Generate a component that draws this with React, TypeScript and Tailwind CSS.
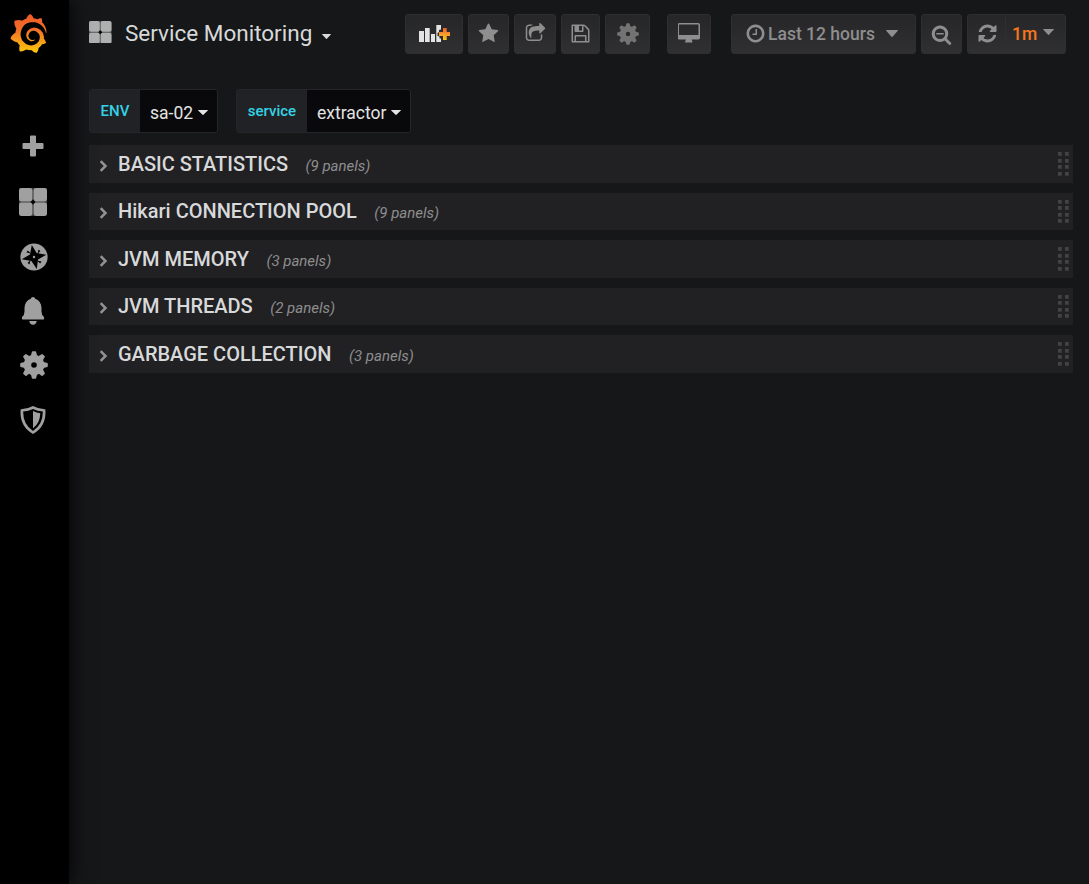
import React from "react";
import { SiGrafana } from "react-icons/si";

const icons = {
  star: "M1728 647q0 22-26 48l-363 354 86 500q1 7 1 20 0 21-10.5 35.5t-30.5 14.5q-19 0-40-12l-449-236-449 236q-22 12-40 12-21 0-31.5-14.5t-10.5-35.5q0-6 2-20l86-500-364-354q-25-27-25-48 0-37 56-46l502-73 225-455q19-41 49-41t49 41l225 455 502 73q56 9 56 46z",
  share: "M1472 989v259q0 119-84.5 203.5t-203.5 84.5h-832q-119 0-203.5-84.5t-84.5-203.5v-832q0-119 84.5-203.5t203.5-84.5h255q13 0 22.5 9.5t9.5 22.5q0 27-26 32-77 26-133 60-10 4-16 4h-112q-66 0-113 47t-47 113v832q0 66 47 113t113 47h832q66 0 113-47t47-113v-214q0-19 18-29 28-13 54-37 16-16 35-8 21 9 21 29zm237-496l-384 384q-18 19-45 19-12 0-25-5-39-17-39-59v-192h-160q-323 0-438 131-119 137-74 473 3 23-20 34-8 2-12 2-16 0-26-13-10-14-21-31t-39.5-68.5-49.5-99.5-38.5-114-17.5-122q0-49 3.5-91t14-90 28-88 47-81.5 68.5-74 94.5-61.5 124.5-48.5 159.5-30.5 196.5-11h160v-192q0-42 39-59 13-5 25-5 26 0 45 19l384 384q19 19 19 45t-19 45z",
  save: "M512 1536h768v-384h-768v384zm896 0h128v-896q0-14-10-38.5t-20-34.5l-281-281q-10-10-34-20t-39-10v416q0 40-28 68t-68 28h-576q-40 0-68-28t-28-68v-416h-128v1280h128v-416q0-40 28-68t68-28h832q40 0 68 28t28 68v416zm-384-928v-320q0-13-9.5-22.5t-22.5-9.5h-192q-13 0-22.5 9.5t-9.5 22.5v320q0 13 9.5 22.5t22.5 9.5h192q13 0 22.5-9.5t9.5-22.5zm640 32v928q0 40-28 68t-68 28h-1344q-40 0-68-28t-28-68v-1344q0-40 28-68t68-28h928q40 0 88 20t76 48l280 280q28 28 48 76t20 88z",
  desktop: "M1728 992v-832q0-13-9.5-22.5t-22.5-9.5h-1600q-13 0-22.5 9.5t-9.5 22.5v832q0 13 9.5 22.5t22.5 9.5h1600q13 0 22.5-9.5t9.5-22.5zm128-832v1088q0 66-47 113t-113 47h-544q0 37 16 77.5t32 71 16 43.5q0 26-19 45t-45 19h-512q-26 0-45-19t-19-45q0-14 16-44t32-70 16-78h-544q-66 0-113-47t-47-113v-1088q0-66 47-113t113-47h1600q66 0 113 47t47 113z",
  clock: "M1024 544v448q0 14-9 23t-23 9h-320q-14 0-23-9t-9-23v-64q0-14 9-23t23-9h224v-352q0-14 9-23t23-9h64q14 0 23 9t9 23zm416 352q0-148-73-273t-198-198-273-73-273 73-198 198-73 273 73 273 198 198 273 73 273-73 198-198 73-273zm224 0q0 209-103 385.5t-279.5 279.5-385.5 103-385.5-103-279.5-279.5-103-385.5 103-385.5 279.5-279.5 385.5-103 385.5 103 279.5 279.5 103 385.5z",
  zoomOut: "M1088 800v64q0 13-9.5 22.5t-22.5 9.5h-576q-13 0-22.5-9.5t-9.5-22.5v-64q0-13 9.5-22.5t22.5-9.5h576q13 0 22.5 9.5t9.5 22.5zm128 32q0-185-131.5-316.5t-316.5-131.5-316.5 131.5-131.5 316.5 131.5 316.5 316.5 131.5 316.5-131.5 131.5-316.5zm512 832q0 53-37.5 90.5t-90.5 37.5q-54 0-90-38l-343-342q-179 124-399 124-143 0-273.5-55.5t-225-150-150-225-55.5-273.5 55.5-273.5 150-225 225-150 273.5-55.5 273.5 55.5 225 150 150 225 55.5 273.5q0 220-124 399l343 343q37 37 37 90z",
  refresh: "M1639 1056q0 5-1 7-64 268-268 434.5t-478 166.5q-146 0-282.5-55t-243.5-157l-129 129q-19 19-45 19t-45-19-19-45v-448q0-26 19-45t45-19h448q26 0 45 19t19 45-19 45l-137 137q71 66 161 102t187 36q134 0 250-65t186-179q11-17 53-117 8-23 30-23h192q13 0 22.5 9.5t9.5 22.5zm25-800v448q0 26-19 45t-45 19h-448q-26 0-45-19t-19-45 19-45l138-138q-148-137-349-137-134 0-250 65t-186 179q-11 17-53 117-8 23-30 23h-199q-13 0-22.5-9.5t-9.5-22.5v-7q65-268 270-434.5t480-166.5q146 0 284 55.5t245 156.5l130-129q19-19 45-19t45 19 19 45z",
};

function Glyph({ d, className = "size-[21px]", box = "0 0 1792 1792" }: { d: string; className?: string; box?: string }) {
  return (
    <svg viewBox={box} className={`shrink-0 ${className}`} fill="currentColor">
      <path d={d} />
    </svg>
  );
}

function Gear({ className }: { className: string }) {
  return (
    <svg viewBox="-14 -14 28 28" className={`shrink-0 ${className}`} fill="currentColor">
      <path fillRule="evenodd" d="M0-10A10 10 0 1 1 0 10A10 10 0 1 1 0-10ZM0-2.8A2.8 2.8 0 1 0 0 2.8A2.8 2.8 0 1 0 0-2.8Z" />
      {[0, 45, 90, 135, 180, 225, 270, 315].map((a) => (
        <path key={a} transform={`rotate(${a})`} d="M-4.2-8.8Q-2.4-10-2.3-12.4Q-2.2-13.8-1.2-13.8H1.2Q2.2-13.8 2.3-12.4Q2.4-10 4.2-8.8Z" />
      ))}
    </svg>
  );
}

function Squares({ className }: { className: string }) {
  return (
    <svg viewBox="0 0 28 28" className={`shrink-0 ${className}`} fill="currentColor">
      <rect x="0" y="0" width="28" height="28" rx="2" opacity=".42" />
      <rect x="0" y="0" width="13.4" height="13.4" rx="2.4" />
      <rect x="14.6" y="0" width="13.4" height="13.4" rx="2.4" />
      <rect x="0" y="14.6" width="13.4" height="13.4" rx="2.4" />
      <rect x="14.6" y="14.6" width="13.4" height="13.4" rx="2.4" />
      <path d="M14 11.6L16.4 14L14 16.4L11.6 14Z" fill="#050505" />
    </svg>
  );
}

function Caret({ className }: { className: string }) {
  return (
    <svg viewBox="0 0 12 6" preserveAspectRatio="none" className={`shrink-0 ${className}`} fill="currentColor">
      <path d="M.5 0h11q.7 0 .3.6L6.5 5.7q-.5.5-1 0L.2.6Q-.2 0 .5 0Z" />
    </svg>
  );
}

function NavButton({ className, children }: { className: string; children: React.ReactNode }) {
  return (
    <button className={`flex h-10 shrink-0 items-center rounded-[3px] border border-[#2f2f32] bg-linear-to-b from-[#262628] to-[#303032] text-[#8e8e8e] ${className}`}>
      {children}
    </button>
  );
}

function AddPanelIcon() {
  return (
    <svg viewBox="0 0 32 20" className="ml-px h-5 w-8 shrink-0">
      <defs>
        <linearGradient id="plus" x1="0" y1="0" x2="0" y2="1">
          <stop offset="0" stopColor="#f0592b" />
          <stop offset=".5" stopColor="#f7982d" />
          <stop offset="1" stopColor="#fdc90f" />
        </linearGradient>
      </defs>
      <path fill="#e3e3e3" d="M0 7h5v11H0zM6 4h4.700v14H6zM12 10h4v8h-4zM17.300 1h4.700v4.500L20 6v2l-1.500 1v3l2 .5v2h1.500V18h-4.700z" />
      <path fill="url(#plus)" d="M24 4h3.700v4h3.300v4h-3.300v4h-3.700v-4h-4V8h4z" />
    </svg>
  );
}

function Variable({ label, value, labelWidth, valueWidth }: { label: string; value: string; labelWidth: string; valueWidth: string }) {
  return (
    <div className="flex h-11 overflow-hidden rounded-[3px] border border-[#252628]">
      <div className={`flex items-center justify-center bg-[#212226] pt-px text-[15px] font-medium text-[#33d3e5] ${labelWidth}`}>{label}</div>
      <div className={`flex items-center gap-1 bg-[#09090b] pt-[5px] pl-2.5 text-[17.5px] text-[#e3e3e3] ${valueWidth}`}>
        <span className="whitespace-nowrap">{value}</span>
        <Caret className="mb-0.5 ml-px h-[5px] w-[10px]" />
      </div>
    </div>
  );
}

const rows = [
  { title: "BASIC STATISTICS", panels: 9 },
  { title: "Hikari CONNECTION POOL", panels: 9 },
  { title: "JVM MEMORY", panels: 3 },
  { title: "JVM THREADS", panels: 2 },
  { title: "GARBAGE COLLECTION", panels: 3 },
];

function Row({ title, panels }: { title: string; panels: number }) {
  return (
    <div className="flex h-[37.5px] items-center bg-[#212124] pr-1 pl-[10px]">
      <svg viewBox="0 0 8 12" className="mt-1 h-3 w-[9px] shrink-0" fill="none" stroke="#929292" strokeWidth="2.5">
        <path d="M1.200 1.200L6 6L1.200 10.800" />
      </svg>
      <h2 className="ml-[10px] text-[20px] leading-6 font-medium text-[#d8d9da]">{title}</h2>
      <span className="mt-1 ml-[17.500px] text-[15px] text-[#8e8e8e] italic">({panels} panels)</span>
      <div className="ml-auto grid grid-cols-2 gap-x-[3px] gap-y-[2.500px]">
        {[0, 1, 2, 3, 4, 5, 6, 7].map((i) => (
          <i key={i} className="size-1 border-r border-b border-[#38383a] bg-[#434346]" />
        ))}
      </div>
    </div>
  );
}

function Sidebar() {
  return (
    <nav className="relative z-10 flex w-[69px] shrink-0 flex-col bg-black text-[#a0a0a0] shadow-[0_0_20px_#000]">
      <svg className="size-0">
        <defs>
          <linearGradient id="brand" x1="0" y1="0" x2="0" y2="1">
            <stop offset="0" stopColor="#f05a28" />
            <stop offset=".4" stopColor="#f36f27" />
            <stop offset="1" stopColor="#fbca0a" />
          </linearGradient>
        </defs>
      </svg>
      <SiGrafana className="mt-3.5 ml-[9px] size-[39px]" style={{ fill: "url(#brand)" }} />
      <div className="mt-[79px] flex w-[66px] flex-col items-center">
        <div className="flex h-7 items-center">
          <svg viewBox="0 0 22 22" className="size-[22px]" fill="currentColor">
            <path d="M9 .5h4q1 0 1 1V8h6.500q1 0 1 1v4q0 1-1 1H14v6.500q0 1-1 1H9q-1 0-1-1V14H1.500q-1 0-1-1V9q0-1 1-1H8V1.500q0-1 1-1Z" />
          </svg>
        </div>
        <Squares className="mt-7 size-7" />
        <svg viewBox="-14 -14 28 28" className="mt-[26.500px] ml-px size-7">
          <circle r="13.600" fill="currentColor" />
          <g fill="#000">
            <path d="M-2.200-12L2.600-4L12.300-2.200L4 2.600L2.800 12L-2.600 4L-12.300 2.200L-4-2.600Z" />
            <path d="M4.500-7.500L6.400-6L3.500-3zM7.500 4.500L6.200 6.400L3 3.500zM-4.500 7.500L-6.400 6L-3.500 3zM-7.500-4.500L-6.200-6.400L-3-3.500z" />
          </g>
          <circle r="1.200" fill="currentColor" />
        </svg>
        <svg viewBox="0 0 24 28" className="mt-[26.500px] h-7 w-6" fill="currentColor">
          <path d="M12 0Q14 0 14.200 1.700Q20 3.500 20.500 11V14.500Q20.500 18 22.800 19.700Q23.500 21 22.800 22.500H1.200Q.5 21 1.200 19.700Q3.500 18 3.500 14.500V11Q4 3.500 9.800 1.700Q10 0 12 0ZM8.300 24H15.700Q15.200 27.700 12 27.700T8.300 24Z" />
        </svg>
        <Gear className="mt-[26px] ml-px size-7" />
        <svg viewBox="0 0 26 28" className="mt-[27px] h-7 w-[26px]" fill="currentColor">
          <path fillRule="evenodd" d="M13 0Q19 3.300 25.300 3.200Q27 20 13 28Q-1 20 .7 3.200Q7 3.300 13 0ZM13 3Q8.500 5.400 3.200 5.600Q2.900 18.500 13 25Q23.100 18.500 22.800 5.600Q17.500 5.400 13 3Z" />
          <path d="M13 5Q16.500 7 20.300 7.300Q20 17.300 13 22.300Z" />
        </svg>
      </div>
    </nav>
  );
}

export default function App() {
  return (
    <div className="flex h-[884px] w-[1089px] overflow-hidden bg-[#161719] font-['Roboto',sans-serif]">
      <Sidebar />
      <main className="flex min-w-0 flex-1 flex-col pl-5">
        <header className="flex pt-3.5 text-[#d8d9da]">
          <div className="flex h-10 w-[316px] shrink-0 items-center">
            <Squares className="mb-1 size-[22.500px] text-[#afb0b0]" />
            <h1 className="mb-0.5 ml-[13.500px] text-[22.500px] leading-7 whitespace-nowrap">Service Monitoring</h1>
            <Caret className="mt-[5px] ml-2.5 h-[5px] w-[9px]" />
          </div>
          <NavButton className="w-[58px] justify-center">
            <AddPanelIcon />
          </NavButton>
          <NavButton className="ml-[5px] w-[41px] justify-center">
            <Glyph d={icons.star} className="mb-px size-[21px]" />
          </NavButton>
          <NavButton className="ml-[5px] w-[42px] justify-center">
            <Glyph d={icons.share} className="mb-px size-[21px]" />
          </NavButton>
          <NavButton className="ml-[5px] w-[39px] justify-center">
            <Glyph d={icons.save} className="mb-px size-[21px]" />
          </NavButton>
          <NavButton className="ml-[5px] w-[45px] justify-center">
            <Gear className="size-[22px] text-[#737374]" />
          </NavButton>
          <NavButton className="ml-[17px] w-11 justify-center">
            <Glyph d={icons.desktop} box="0 0 1920 1792" className="mb-px h-[21px] w-[23px]" />
          </NavButton>
          <NavButton className="ml-5 w-[185px] pl-[13px]">
            <Glyph d={icons.clock} className="mb-px size-[21px]" />
            <span className="mt-px ml-0.5 text-[17.500px] font-medium whitespace-nowrap">Last 12 hours</span>
            <Caret className="mb-px ml-[11px] h-[7px] w-3" />
          </NavButton>
          <NavButton className="ml-[5px] w-[41px] justify-center">
            <Glyph d={icons.zoomOut} />
          </NavButton>
          <NavButton className="ml-[5px] w-[99px]">
            <span className="flex h-full w-[38px] items-center justify-center border-r border-[#2f2f32] pl-px">
              <Glyph d={icons.refresh} className="mb-px size-[21px]" />
            </span>
            <span className="mt-px ml-[6px] text-[17.500px] font-medium text-[#f5761b]">1m</span>
            <Caret className="mb-1 ml-[5.500px] h-1.5 w-[11px]" />
          </NavButton>
        </header>
        <div className="mt-[35px] flex gap-[18px]">
          <Variable label="ENV" value="sa-02" labelWidth="w-[50px]" valueWidth="w-[77px]" />
          <Variable label="service" value="extractor" labelWidth="w-[70px]" valueWidth="w-[103px]" />
        </div>
        <section className="mt-3 mr-4 flex flex-col gap-2.5">
          {rows.map((r) => (
            <Row key={r.title} title={r.title} panels={r.panels} />
          ))}
        </section>
      </main>
    </div>
  );
}
